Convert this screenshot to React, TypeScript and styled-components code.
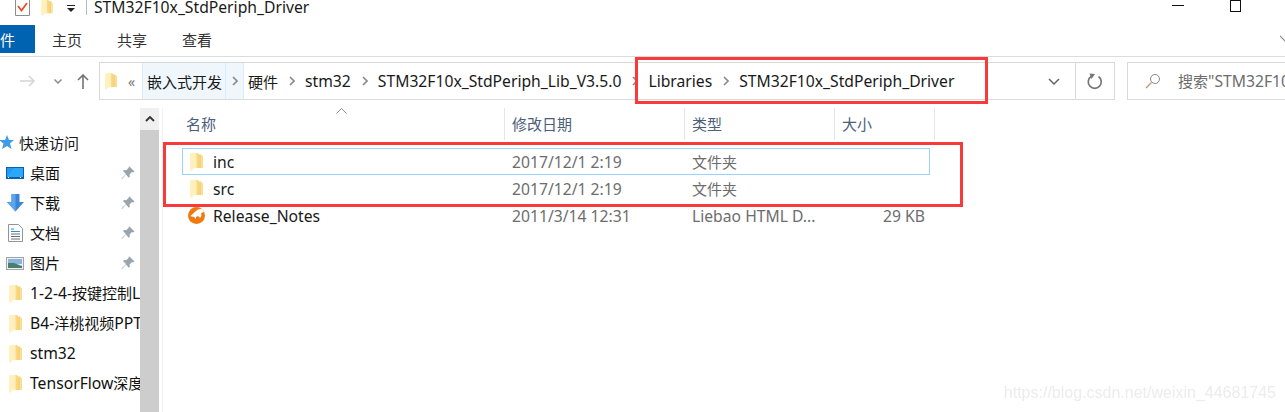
import React from "react";
import styled, { createGlobalStyle } from "styled-components";

const quickItems = [
  { label: "桌面", icon: "desktop", pinned: true },
  { label: "下载", icon: "download", pinned: true },
  { label: "文档", icon: "docs", pinned: true },
  { label: "图片", icon: "pictures", pinned: true },
  { label: "1-2-4-按键控制LED", icon: "folder", pinned: false },
  { label: "B4-洋桃视频PPT", icon: "folder", pinned: false },
  { label: "stm32", icon: "folder", pinned: false },
  { label: "TensorFlow深度学习", icon: "folder", pinned: false },
];

const crumbs = [
  "硬件",
  "stm32",
  "STM32F10x_StdPeriph_Lib_V3.5.0",
  "Libraries",
  "STM32F10x_StdPeriph_Driver",
];

const files = [
  { name: "inc", date: "2017/12/1 2:19", type: "文件夹", size: "", selected: true },
  { name: "src", date: "2017/12/1 2:19", type: "文件夹", size: "", selected: false },
  { name: "Release_Notes", date: "2011/3/14 12:31", type: "Liebao HTML D...", size: "29 KB", selected: false },
];

// latin runs are a touch larger than the CJK ones in the original UI font
function Mixed({ text }: { text: string }) {
  const parts = text.split(/([\x00-\x7f]+)/).filter(Boolean);
  return (
    <>
      {parts.map((part, i) =>
        /^[\x00-\x7f]+$/.test(part) ? <Latin key={i}>{part}</Latin> : <span key={i}>{part}</span>
      )}
    </>
  );
}

function FolderIcon({ width = 13, height = 18 }: { width?: number; height?: number }) {
  return (
    <svg width={width} height={height} viewBox="0 0 13 18">
      <defs>
        <linearGradient id="folderBody" x1="0" y1="0" x2="1" y2="0">
          <stop offset="0" stopColor="#fbe39a" />
          <stop offset="1" stopColor="#f5cf70" />
        </linearGradient>
      </defs>
      <path d="M3 0h5l1 1.500h2.500V15H3z" fill="url(#folderBody)" />
      <path d="M11.500 3H13v12h-1.500z" fill="#f8dc8e" />
      <path d="M0 .5L3 0h3.500v15L3 15.500 2 18l-2-1z" fill="#fff0bd" />
    </svg>
  );
}

function Chevron() {
  return (
    <svg width="6" height="10" viewBox="0 0 6 10">
      <path d="M1 1l4 4-4 4" fill="none" stroke="#8a8a8a" strokeWidth="1.700" />
    </svg>
  );
}

function PinIcon() {
  return (
    <svg width="14" height="14" viewBox="0 0 14 14">
      <path d="M8.500.5l5 5-1.500 1-1-.5-2.500 2.500.3 2.200-1 1L5 8.500 1 13l-.5-.5L5 8 2 5l1-1 2.200.3L7.800 1.800 7.500.8z" fill="#9aa4ad" />
    </svg>
  );
}

function SideIcon({ kind }: { kind: string }) {
  if (kind === "desktop") {
    return (
      <svg width="18" height="12" viewBox="0 0 18 12">
        <rect width="18" height="12" fill="#0d5ea8" />
        <rect x="1" y="1" width="16" height="9" fill="#1f9bf5" />
        <path d="M1 10L8 1h9v9z" fill="#2aa8fa" />
        <path d="M2 10.500h1M14 10.500h1" stroke="#fff" />
      </svg>
    );
  }
  if (kind === "download") {
    return (
      <svg width="17" height="18" viewBox="0 0 17 18">
        <path d="M4.500 0h8v8H17l-8.500 9.500L0 8h4.500z" fill="#3a86d6" />
        <path d="M4.500 0h4v17.500L0 8h4.500z" fill="#5ba6ec" />
      </svg>
    );
  }
  if (kind === "docs") {
    return (
      <svg width="15" height="18" viewBox="0 0 15 18">
        <path d="M.5.5h10l4 4v13H.5z" fill="#fff" stroke="#8e959b" />
        <path d="M3 5h3M3 7.500h9" stroke="#2f8fd8" />
        <path d="M3 10h9M3 12.500h9M3 15h9" stroke="#67707a" />
      </svg>
    );
  }
  if (kind === "pictures") {
    return (
      <svg width="18" height="13" viewBox="0 0 18 13">
        <rect x=".5" y=".5" width="17" height="12" fill="#eef1f4" stroke="#a0a4a8" />
        <rect x="2" y="2" width="14" height="5" fill="#8db4dc" />
        <path d="M2 6l6 0 8 3v2H2z" fill="#4a7f6c" />
      </svg>
    );
  }
  return <FolderIcon />;
}

export default function App() {
  return (
    <Page>
      <GlobalStyle />
      <TitleBar>
        <TitleIcons>
          <svg width="15" height="16" viewBox="0 0 15 16">
            <path d="M.5 0v15.500h14V0" fill="#fff" stroke="#8d8d8d" />
            <path d="M3 6l3.500 4.500L12 3" fill="none" stroke="#e8501f" strokeWidth="1.800" />
          </svg>
          <TitleFolder>
            <FolderIcon width={12} height={16} />
          </TitleFolder>
          <TitleDropdown>
            <svg width="8" height="7" viewBox="0 0 8 7">
              <path d="M0 0h8v1H0zM0 3h8L4 7z" fill="#222" />
            </svg>
          </TitleDropdown>
        </TitleIcons>
        <TitleDivider />
        <TitleText>
          <Mixed text="STM32F10x_StdPeriph_Driver" />
        </TitleText>
        <WindowButtons>
          <MinimizeButton />
          <MaximizeButton />
        </WindowButtons>
      </TitleBar>

      <RibbonTabs>
        <FileTab>
          <span>文件</span>
        </FileTab>
        <RibbonTab>主页</RibbonTab>
        <RibbonTab>共享</RibbonTab>
        <RibbonTab>查看</RibbonTab>
        <RibbonExpand>
          <svg width="10" height="7" viewBox="0 0 10 7">
            <path d="M0 1l5 5 5-5" fill="none" stroke="#8a8a8a" strokeWidth="1.200" />
          </svg>
        </RibbonExpand>
      </RibbonTabs>

      <NavRow>
        <NavButtons>
          <svg width="15" height="12" viewBox="0 0 15 12">
            <path d="M0 6h14M9 1l5 5-5 5" fill="none" stroke="#d4d4d4" strokeWidth="1.500" />
          </svg>
          <svg width="8" height="5" viewBox="0 0 8 5">
            <path d="M.5.5L4 4 7.500.5" fill="none" stroke="#8c8c8c" strokeWidth="1.500" />
          </svg>
          <svg width="12" height="15" viewBox="0 0 12 15">
            <path d="M6 15V1M1 6l5-5 5 5" fill="none" stroke="#737373" strokeWidth="1.600" />
          </svg>
        </NavButtons>
        <AddressBar>
          <AddressFolder>
            <FolderIcon width={12} height={17} />
          </AddressFolder>
          <Overflow>«</Overflow>
          <HoverCrumb>嵌入式开发</HoverCrumb>
          <HoverChevron>
            <Chevron />
          </HoverChevron>
          {crumbs.map((crumb, index) => (
            <CrumbGroup key={crumb}>
              {index > 0 && (
                <ChevronSlot>
                  <Chevron />
                </ChevronSlot>
              )}
              <Crumb>
                <Mixed text={crumb} />
              </Crumb>
            </CrumbGroup>
          ))}
          <AddressEnd>
            <svg width="12" height="7" viewBox="0 0 12 7">
              <path d="M1 1l5 5 5-5" fill="none" stroke="#666" strokeWidth="1.500" />
            </svg>
          </AddressEnd>
          <RefreshButton>
            <svg width="16" height="17" viewBox="0 0 16 17">
              <path d="M11.500 3.500A6.500 6.500 0 1 1 4 3.500" fill="none" stroke="#777" strokeWidth="1.700" />
              <path d="M2.500.5L8 1 4.500 6z" fill="#777" />
            </svg>
          </RefreshButton>
        </AddressBar>
        <SearchBox>
          <SearchIcon>
            <svg width="16" height="16" viewBox="0 0 16 16">
              <circle cx="10" cy="6" r="4.500" fill="none" stroke="#8a8a8a" />
              <path d="M6.500 9.500L1 15" stroke="#b9966f" strokeWidth="1.300" />
            </svg>
          </SearchIcon>
          <SearchText>
            <Mixed text={'搜索"STM32F10x_StdPeriph_Driver"'} />
          </SearchText>
        </SearchBox>
      </NavRow>

      <Body>
        <Sidebar>
          <QuickHeader>
            <svg width="15" height="15" viewBox="0 0 15 15">
              <path d="M8 0l2 5h5l-4 3.500L12.500 14 8 11 3 14l1.500-5.500L0 5h6z" fill="#3f9be6" />
            </svg>
            <span>快速访问</span>
          </QuickHeader>
          {quickItems.map((item) => (
            <SideRow key={item.label} $folder={item.icon === "folder"}>
              <SideIconSlot>
                <SideIcon kind={item.icon} />
              </SideIconSlot>
              <SideLabel>
                <Mixed text={item.label} />
              </SideLabel>
              {item.pinned && (
                <PinSlot>
                  <PinIcon />
                </PinSlot>
              )}
            </SideRow>
          ))}
        </Sidebar>
        <ScrollBar>
          <ScrollUp>
            <svg width="10" height="6" viewBox="0 0 10 6">
              <path d="M1 5l4-4 4 4" fill="none" stroke="#333" strokeWidth="1.800" />
            </svg>
          </ScrollUp>
          <ScrollThumb />
        </ScrollBar>
        <FileList>
          <HeaderRow>
            <HeaderCell $first>
              名称
              <SortCaret>
                <svg width="11" height="6" viewBox="0 0 11 6">
                  <path d="M.5 5.500L5.500.5l5 5" fill="none" stroke="#8d8d8d" />
                </svg>
              </SortCaret>
            </HeaderCell>
            <HeaderCell>修改日期</HeaderCell>
            <HeaderCell>类型</HeaderCell>
            <HeaderCell>大小</HeaderCell>
          </HeaderRow>
          <Rows>
            {files.map((file) => (
              <FileRow key={file.name} $selected={file.selected}>
                <NameCell>
                  <FileIconSlot>
                    {file.type === "文件夹" ? (
                      <FolderIcon />
                    ) : (
                      <svg width="17" height="17" viewBox="0 0 17 17">
                        <circle cx="8.500" cy="8.500" r="8.500" fill="#ef7a12" />
                        <path d="M2 9c2-.5 3-3 5-4 1-2 4-3.500 7-3 1 1 1.500 2 2 3l-3 1c1 2 0 4-1 5l-2-2-2 1 0 2-2-2z" fill="#fff" />
                      </svg>
                    )}
                  </FileIconSlot>
                  <Mixed text={file.name} />
                </NameCell>
                <InfoCell>
                  <Mixed text={file.date} />
                </InfoCell>
                <InfoCell>
                  <Mixed text={file.type} />
                </InfoCell>
                <SizeCell>
                  <Mixed text={file.size} />
                </SizeCell>
              </FileRow>
            ))}
          </Rows>
        </FileList>
      </Body>

      <AddressHighlight />
      <FilesHighlight />
      <Watermark>https://blog.csdn.net/weixin_44681745</Watermark>
    </Page>
  );
}

const GlobalStyle = createGlobalStyle`
  html, body {
    margin: 0;
    padding: 0;
    background: #fff;
  }
`;

const Page = styled.div`
  position: relative;
  width: 1285px;
  height: 412px;
  overflow: hidden;
  background: #fff;
  color: #1a1a1a;
  font-family: "Noto Sans", "Noto Sans CJK SC", sans-serif;
  font-size: 15px;
`;

const Latin = styled.span`
  font-size: 15.7px;
`;

const TitleBar = styled.div`
  display: flex;
  align-items: flex-start;
  height: 25px;
  padding-left: 15px;
`;

const TitleIcons = styled.div`
  display: flex;
  align-items: flex-start;
  flex: none;
  width: 65px;
`;

const TitleFolder = styled.div`
  display: flex;
  margin-left: 11px;
`;

const TitleDropdown = styled.div`
  display: flex;
  margin-top: 5px;
  margin-left: 14px;
`;

const TitleDivider = styled.div`
  width: 1px;
  height: 15px;
  margin-left: 6px;
  margin-right: 7px;
  background: #b8b8b8;
`;

const TitleText = styled.div`
  line-height: 15px;
`;

const WindowButtons = styled.div`
  display: flex;
  align-items: flex-start;
  margin-left: auto;
  margin-right: 44px;
  gap: 46px;
`;

const MinimizeButton = styled.div`
  width: 12px;
  height: 1px;
  margin-top: 5px;
  background: #111;
`;

const MaximizeButton = styled.div`
  width: 9px;
  height: 10px;
  border: 1px solid #111;
`;

const RibbonTabs = styled.div`
  display: flex;
  align-items: center;
  height: 28px;
  padding-bottom: 3px;
  border-bottom: 1px solid #dcdcdc;
`;

const FileTab = styled.div`
  display: flex;
  justify-content: flex-end;
  align-items: center;
  width: 35px;
  height: 28px;
  padding-right: 20px;
  box-sizing: border-box;
  background: #0063b1;
  color: #fff;
  white-space: nowrap;

  span {
    flex: none;
  }
`;

const RibbonTab = styled.div`
  margin-left: 17px;
  margin-right: 18px;
  width: 30px;
  white-space: nowrap;
  color: #333;
`;

const RibbonExpand = styled.div`
  display: flex;
  margin-left: auto;
  margin-right: -5px;
  margin-top: -2px;
`;

const NavRow = styled.div`
  display: flex;
  height: 38px;
  margin-top: 5px;
`;

const NavButtons = styled.div`
  display: flex;
  align-items: center;
  flex: none;
  gap: 19px;
  width: 99px;
  padding-left: 20px;
  box-sizing: border-box;

  svg:last-child {
    margin-left: -4px;
  }
`;

const AddressBar = styled.div`
  display: flex;
  align-items: center;
  flex: none;
  width: 1016px;
  box-sizing: border-box;
  border: 1px solid #d9d9d9;
  white-space: nowrap;
`;

const AddressFolder = styled.div`
  display: flex;
  margin-left: 5px;
`;

const Overflow = styled.div`
  margin-left: 11px;
  width: 14px;
  color: #777;
  font-size: 14px;
`;

const HoverCrumb = styled.div`
  display: flex;
  align-items: center;
  align-self: stretch;
  width: 83px;
  padding-left: 4px;
  box-sizing: border-box;
  background: #eff7fd;
  border-left: 1px solid #dcecfa;
`;

const HoverChevron = styled.div`
  display: flex;
  align-items: center;
  justify-content: center;
  align-self: stretch;
  width: 17px;
  margin-right: 4px;
  background: #eff7fd;
  border-left: 1px solid #dcecfa;
  border-right: 1px solid #dcecfa;
`;

const CrumbGroup = styled.div`
  display: flex;
  align-items: center;
`;

const ChevronSlot = styled.div`
  display: flex;
  margin-left: 11px;
  margin-right: 10px;
`;

const Crumb = styled.div`
  color: #1a1a1a;
`;

const AddressEnd = styled.div`
  display: flex;
  margin-left: auto;
  margin-right: 15px;
`;

const RefreshButton = styled.div`
  display: flex;
  align-items: center;
  justify-content: center;
  align-self: stretch;
  width: 38px;
  border-left: 1px solid #d9d9d9;
`;

const SearchBox = styled.div`
  display: flex;
  align-items: center;
  flex: none;
  width: 170px;
  margin-left: 12px;
  padding-left: 17px;
  box-sizing: border-box;
  border: 1px solid #d9d9d9;
  color: #6d6d6d;
  white-space: nowrap;
  overflow: hidden;
`;

const SearchIcon = styled.div`
  display: flex;
  flex: none;
`;

const SearchText = styled.span`
  flex: none;
  margin-left: 17px;
`;

const Body = styled.div`
  display: flex;
  height: 304px;
  margin-top: 8px;
`;

const Sidebar = styled.div`
  width: 140px;
  padding-top: 19px;
  box-sizing: border-box;
  overflow: hidden;
  white-space: nowrap;
`;

const QuickHeader = styled.div`
  display: flex;
  align-items: center;
  gap: 5px;
  height: 30px;
  margin-left: -1px;
`;

const SideRow = styled.div<{ $folder: boolean }>`
  display: flex;
  align-items: center;
  height: 30px;
  box-sizing: border-box;
  padding-top: ${(p) => (p.$folder ? "2px" : "0")};
`;

const SideIconSlot = styled.div`
  display: flex;
  justify-content: center;
  flex: none;
  width: 18px;
  margin-top: 2px;
  margin-left: 6px;
  margin-right: 6px;
`;

const SideLabel = styled.div`
  color: #111;
`;

const PinSlot = styled.div`
  display: flex;
  margin-top: 2px;
  margin-left: auto;
  margin-right: 5px;
`;

const ScrollBar = styled.div`
  display: flex;
  flex-direction: column;
  flex: none;
  width: 19px;
  background: #f0f0f0;
`;

const ScrollUp = styled.div`
  display: flex;
  align-items: center;
  justify-content: center;
  height: 22px;
`;

const ScrollThumb = styled.div`
  flex: 1;
  background: #cdcdcd;
`;

const FileList = styled.div`
  flex: 1;
  margin-left: 3px;
  padding-left: 20px;
  border-left: 1px solid #f2f2f2;
`;

const HeaderRow = styled.div`
  display: grid;
  grid-template-columns: 322px 180px 150px 100px;
  height: 32px;
  width: 752px;
`;

const HeaderCell = styled.div<{ $first?: boolean }>`
  position: relative;
  display: flex;
  align-items: center;
  padding-left: ${(p) => (p.$first ? "3px" : "7px")};
  padding-bottom: 2px;
  border-right: 1px solid #e5e5e5;
  color: #4c607a;
`;

const SortCaret = styled.div`
  position: absolute;
  top: 0;
  left: 153px;
  display: flex;
`;

const Rows = styled.div`
  margin-top: 8px;
  width: 747px;
`;

const FileRow = styled.div<{ $selected: boolean }>`
  display: grid;
  grid-template-columns: 322px 180px 149px 96px;
  align-items: center;
  height: 27px;
  box-sizing: border-box;
  border: 1px solid ${(p) => (p.$selected ? "#99d1ff" : "transparent")};
  margin-left: -1px;
  width: 748px;
`;

const NameCell = styled.div`
  display: flex;
  align-items: center;
  color: #1a1a1a;
`;

const FileIconSlot = styled.div`
  display: flex;
  justify-content: center;
  width: 18px;
  margin-left: 4px;
  margin-right: 8px;
`;

const InfoCell = styled.div`
  padding-left: 7px;
  color: #6d6d6d;
  white-space: nowrap;
`;

const SizeCell = styled.div`
  padding-right: 5px;
  text-align: right;
  color: #6d6d6d;
`;

const AddressHighlight = styled.div`
  position: absolute;
  left: 635px;
  top: 57px;
  width: 353px;
  height: 47px;
  box-sizing: border-box;
  border: 3px solid #f93a3a;
`;

const FilesHighlight = styled.div`
  position: absolute;
  left: 163px;
  top: 142px;
  width: 800px;
  height: 65px;
  box-sizing: border-box;
  border: 3px solid #f93a3a;
`;

const Watermark = styled.div`
  position: absolute;
  right: 9px;
  top: 384px;
  color: #ececec;
  font-family: "Liberation Sans", sans-serif;
  font-size: 16px;
  white-space: nowrap;
  filter: blur(0.4px);
`;
